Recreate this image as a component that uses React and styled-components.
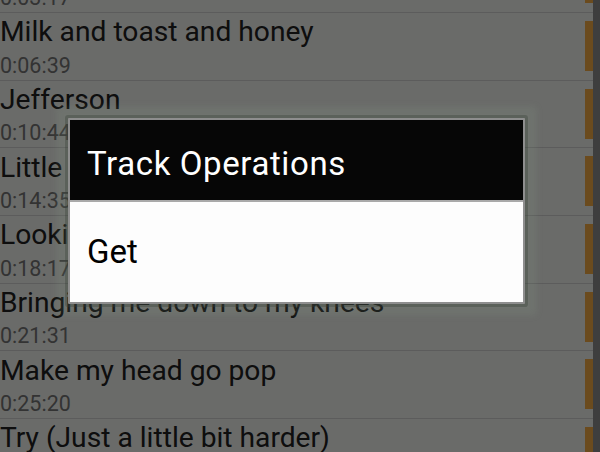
import React from "react";
import styled, { createGlobalStyle } from "styled-components";

const Global = createGlobalStyle`
  html, body { margin: 0; padding: 0; background: #ffffff; }
  body { width: 600px; height: 452px; overflow: hidden; font-family: Roboto, "Noto Sans", "Liberation Sans", sans-serif; }
`;

const Screen = styled.div`
  position: relative;
  width: 600px;
  height: 452px;
  overflow: hidden;
  display: flex;
  background: #fdfffb;
`;

const List = styled.div`
  flex: 1;
  display: flex;
  flex-direction: column;
  margin-top: -55.67px;
`;

const Row = styled.div`
  display: grid;
  grid-template-columns: 1fr 8px;
  height: 66.67px;
  flex: none;
  border-top: 1px solid #dcdcdc;
`;

const Texts = styled.div`
  padding: 3.4px 0 0 0;
  white-space: nowrap;
  overflow: hidden;
`;

const Title = styled.div`
  font-size: 28.2px;
  line-height: 32px;
  color: #222222;
`;

const Time = styled.div`
  margin-top: 5.2px;
  font-size: 21.5px;
  line-height: 24px;
  color: #7a7a7a;
`;

const Marker = styled.div`
  margin-top: 8px;
  height: 50px;
  background: #ffb248;
`;

const Track = styled.div`
  width: 7px;
  flex: none;
  background: #939393;
`;

const Dim = styled.div`
  position: absolute;
  inset: 0;
  background: rgba(0, 0, 0, 0.58);
  padding: 118px 0 0 68px;
`;

const Dialog = styled.div`
  width: 453px;
  border: 2px solid #8e8e8e;
  box-shadow: 0 0 0 3px rgba(55, 62, 55, 0.35), 0 0 6px 12px rgba(150, 175, 150, 0.12);
  border-radius: 1px;
  display: flex;
  flex-direction: column;
`;

const Header = styled.div`
  height: 82px;
  box-sizing: border-box;
  padding: 25.7px 0 0 17px;
  background: #060606;
  color: #ffffff;
  font-size: 33px;
  line-height: 36px;
  letter-spacing: 0.6px;
  border-bottom: 2px solid #a9a9a9;
`;

const Body = styled.div`
  height: 100px;
  box-sizing: border-box;
  padding: 32px 0 0 17px;
  background: #fdfdfd;
  color: #000000;
  font-size: 33px;
  line-height: 36px;
`;

const tracks = [
  ["The Centre of the Heart", "0:03:17"],
  ["Milk and toast and honey", "0:06:39"],
  ["Jefferson", "0:10:44"],
  ["Little girl", "0:14:35"],
  ["Looking for Jane", "0:18:17"],
  ["Bringing me down to my knees", "0:21:31"],
  ["Make my head go pop", "0:25:20"],
  ["Try (Just a little bit harder)", "0:28:44"],
];

export default function App() {
  return (
    <>
      <Global />
      <Screen>
        <List>
          {tracks.map(([t, time]) => (
            <Row key={t}>
              <Texts>
                <Title>{t}</Title>
                <Time>{time}</Time>
              </Texts>
              <Marker />
            </Row>
          ))}
        </List>
        <Track />
        <Dim>
          <Dialog>
            <Header>Track Operations</Header>
            <Body>Get</Body>
          </Dialog>
        </Dim>
      </Screen>
    </>
  );
}
